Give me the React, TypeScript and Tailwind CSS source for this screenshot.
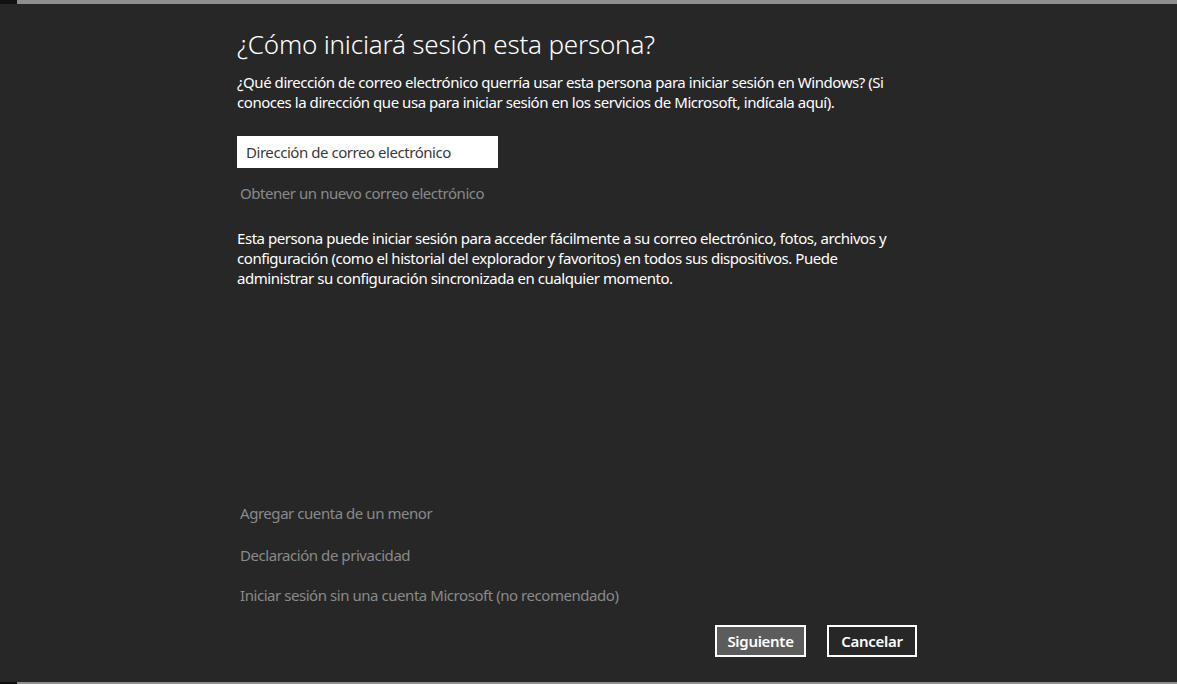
export default function App() {
  return (
    <div
      className="relative flex h-[684px] w-[1177px] flex-col overflow-hidden bg-[#272727] text-white"
      style={{ fontFamily: '"Noto Sans", "Open Sans", sans-serif' }}
    >
      {/* top strip */}
      <div className="flex h-[4px] w-full shrink-0">
        <div className="w-[17px] bg-[#111111]" />
        <div className="flex-1 bg-[#8f8f8f]" />
      </div>

      <div className="flex flex-1 flex-col pl-[237px]">
        <h1 className="mt-[22px] text-[26px] leading-[36px] font-light tracking-[-0.2px] text-white">
          ¿Cómo iniciará sesión esta persona?
        </h1>
        <p className="mt-[10px] w-[656px] text-[15px] leading-[20px] tracking-[-0.45px] text-white">
          ¿Qué dirección de correo electrónico querría usar esta persona para iniciar sesión en Windows? (Si
          conoces la dirección que usa para iniciar sesión en los servicios de Microsoft, indícala aquí).
        </p>

        <div className="mt-[24px] flex h-[32px] w-[261px] items-center bg-white pl-[9px] text-[15px] tracking-[-0.45px] text-[#3a3a3a]">
          Dirección de correo electrónico
        </div>

        <button className="mt-[15px] self-start pl-[3px] text-left text-[15px] leading-[20px] tracking-[-0.45px] text-[#8a8a8a]">
          Obtener un nuevo correo electrónico
        </button>

        <p className="mt-[25px] w-[656px] text-[15px] leading-[20px] tracking-[-0.45px] text-white">
          Esta persona puede iniciar sesión para acceder fácilmente a su correo electrónico, fotos, archivos y
          configuración (como el historial del explorador y favoritos) en todos sus dispositivos. Puede
          administrar su configuración sincronizada en cualquier momento.
        </p>

        <div className="flex-1" />

        <div className="flex flex-col pl-[3px] text-[15px] leading-[20px] tracking-[-0.45px] text-[#8a8a8a]">
          <span>Agregar cuenta de un menor</span>
          <span className="mt-[22px]">Declaración de privacidad</span>
          <span className="mt-[20px]">Iniciar sesión sin una cuenta Microsoft (no recomendado)</span>
        </div>

        <div className="mt-[20px] mb-[25px] flex w-[680px] justify-end gap-[21px]">
          <button className="h-[32px] w-[91px] border-2 border-white bg-[#5c5c5c] text-[15px] font-semibold tracking-[-0.3px] text-white">
            Siguiente
          </button>
          <button className="h-[32px] w-[90px] border-2 border-white bg-transparent text-[15px] font-semibold tracking-[-0.3px] text-white">
            Cancelar
          </button>
        </div>
      </div>

      {/* bottom strip */}
      <div className="flex h-[2px] w-full shrink-0">
        <div className="w-[17px] bg-[#111111]" />
        <div className="flex-1 bg-[#8f8f8f]" />
      </div>
    </div>
  );
}
